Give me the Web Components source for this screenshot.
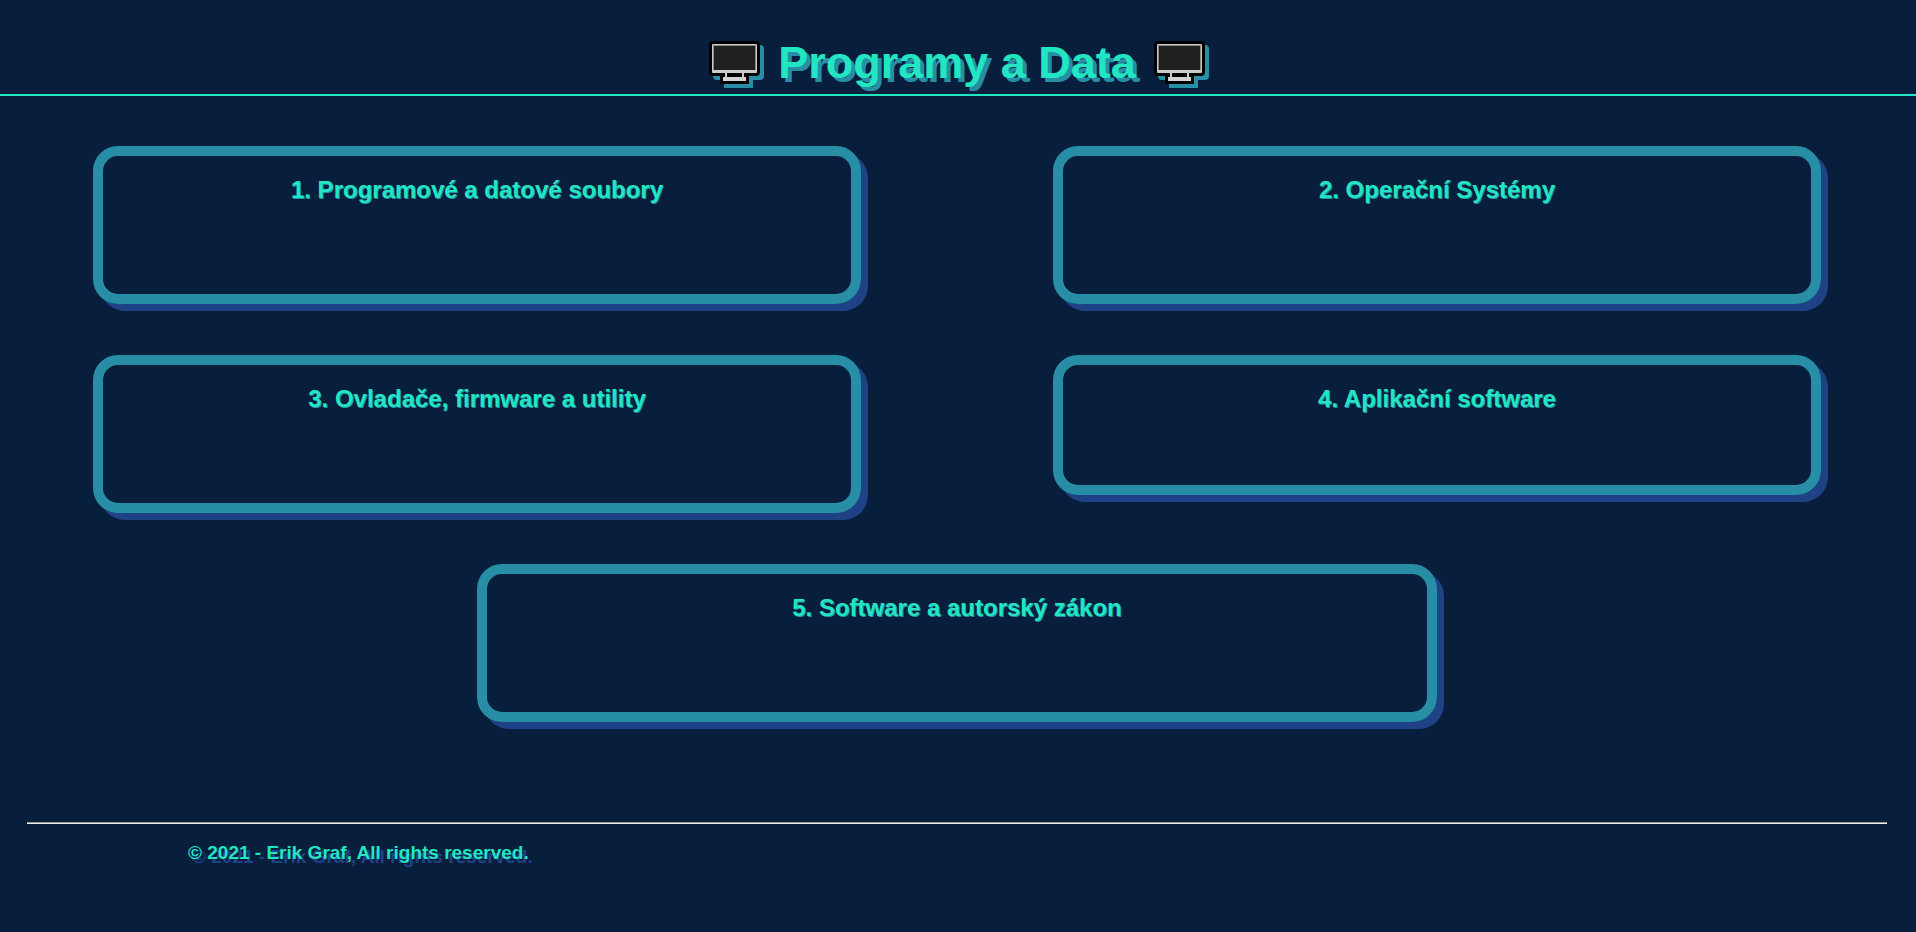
<!DOCTYPE html>
<html lang="cs">
<head>
<meta charset="utf-8">
<meta name="viewport" content="width=device-width, initial-scale=1">
<title>Programy a Data</title>
<style>
  :root { --bg: #071e3d; --blue: #1f4287; --teal: #278ea5; --mint: #21e6c1; }
  body { margin: 0; background: var(--bg); color: var(--mint); font-family: "Liberation Sans", Arial, sans-serif; }
</style>
</head>
<body>
<site-header>Programy a Data</site-header>
<topic-grid>
  <topic-card>1. Programové a datové soubory</topic-card>
  <topic-card>2. Operační Systémy</topic-card>
  <topic-card>3. Ovladače, firmware a utility</topic-card>
  <topic-card compact>4. Aplikační software</topic-card>
  <topic-card wide>5. Software a autorský zákon</topic-card>
</topic-grid>
<site-footer>© 2021 - Erik Graf, All rights reserved.</site-footer>
<script>
  const define = (name, html) => customElements.define(name, class extends HTMLElement {
    constructor() {
      super();
      this.attachShadow({ mode: "open" }).innerHTML = html;
    }
  });

  define("monitor-icon", `
    <style>
      :host { display: block; width: 51px; height: 43px; }
      svg { display: block; overflow: visible; filter: drop-shadow(4px 4px 0 var(--teal)); }
    </style>
    <svg width="51" height="43" viewBox="0 0 51 43" aria-hidden="true">
      <path d="M4 0H47Q51 0 51 4V31Q51 35 47 35H40V43H11V35H4Q0 35 0 31V4Q0 0 4 0Z" fill="#000"/>
      <rect x="3" y="3" width="45" height="29" rx="1" fill="#cacaca"/>
      <rect x="4" y="4" width="43" height="25" fill="#8c8888"/>
      <rect x="5" y="5" width="41" height="24" fill="#202020"/>
      <path d="M16 32h2v4h-2zM33 32h2v4h-2z" fill="#cacaca"/>
      <path d="M14 36H37V40H14Z" fill="#d2d0d0"/>
    </svg>`);

  define("site-header", `
    <style>
      :host { display: block; border-bottom: 2px solid var(--mint); }
      h1 { display: flex; justify-content: center; align-items: flex-start; gap: 18px;
        margin: 0; padding: 37px 2px 5px 0; font-size: 45px; line-height: 52px;
        text-shadow: 4px 4px var(--teal); }
      monitor-icon { margin-top: 4px; }
    </style>
    <header><h1><monitor-icon></monitor-icon><slot></slot><monitor-icon></monitor-icon></h1></header>`);

  define("topic-grid", `
    <style>
      :host { display: block; }
      main { display: grid; grid-template-columns: repeat(9, 1fr); row-gap: 51px;
        align-items: start; padding: 50px 95px 0 93px; }
      ::slotted(*) { grid-column: span 4; }
      ::slotted(:nth-child(even)) { grid-column: 6 / span 4; }
      ::slotted([wide]) { grid-column: 3 / span 5; }
    </style>
    <main><slot></slot></main>`);

  define("topic-card", `
    <style>
      :host { display: block; box-sizing: border-box; min-height: 158px; padding: 20px;
        border: 10px solid var(--teal); border-radius: 25px; box-shadow: 7px 7px var(--blue); }
      :host([compact]) { min-height: 140px; }
      h2 { margin: 0; font-size: 24px; line-height: 28px; text-align: center;
        text-shadow: 1px 1px var(--teal); }
    </style>
    <section><h2><slot></slot></h2></section>`);

  define("site-footer", `
    <style>
      :host { display: block; margin-top: 100px; padding: 0 29px 60px 27px; }
      hr { margin: 0; border: 0; border-top: 1px solid #9a9a9a; border-bottom: 1px solid #eee; }
      p { margin: 0; padding: 17px 161px 0; font-size: 19px; line-height: 24px; font-weight: bold;
        text-shadow: 4px 4px var(--blue); }
    </style>
    <footer><hr><p><slot></slot></p></footer>`);
</script>
</body>
</html>
